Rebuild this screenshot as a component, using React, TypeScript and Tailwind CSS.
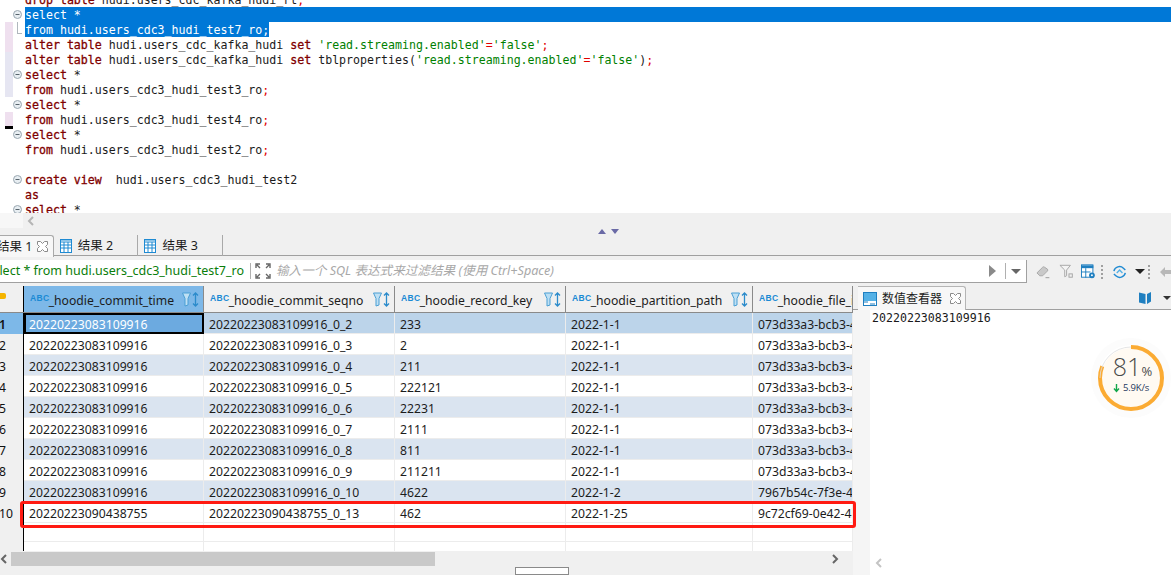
import React from "react";

type Token = { t: string; c?: "kw" | "str" | "op" };
type CodeLine = { marker?: string; fold?: boolean; bracket?: boolean; selected?: "full" | "text"; tokens: Token[] };

const kw = (t: string): Token => ({ t, c: "kw" });
const str = (t: string): Token => ({ t, c: "str" });
const op = (t: string): Token => ({ t, c: "op" });

const PINK = "bg-[#efe0ef]";
const LAV = "bg-[#e6e6f2]";

const codeLines: CodeLine[] = [
  { tokens: [kw("drop table"), { t: " hudi.users_cdc_kafka_hudi_rt" }, op(";")] },
  { fold: true, selected: "full", tokens: [{ t: "select *" }] },
  { bracket: true, marker: PINK, selected: "text", tokens: [{ t: "from hudi.users_cdc3_hudi_test7_ro;" }] },
  { marker: PINK, tokens: [kw("alter table"), { t: " hudi.users_cdc_kafka_hudi " }, kw("set"), { t: " " }, str("'read.streaming.enabled'"), op("="), str("'false'"), op(";")] },
  { marker: LAV, tokens: [kw("alter table"), { t: " hudi.users_cdc_kafka_hudi " }, kw("set"), { t: " tblproperties(" }, str("'read.streaming.enabled'"), op("="), str("'false'"), { t: ")" }, op(";")] },
  { marker: LAV, fold: true, tokens: [kw("select"), { t: " *" }] },
  { marker: LAV, tokens: [kw("from"), { t: " hudi.users_cdc3_hudi_test3_ro" }, op(";")] },
  { fold: true, tokens: [kw("select"), { t: " *" }] },
  { marker: PINK, tokens: [kw("from"), { t: " hudi.users_cdc3_hudi_test4_ro" }, op(";")] },
  { fold: true, tokens: [kw("select"), { t: " *" }] },
  { tokens: [kw("from"), { t: " hudi.users_cdc3_hudi_test2_ro" }, op(";")] },
  { tokens: [] },
  { fold: true, tokens: [kw("create view"), { t: "  hudi.users_cdc3_hudi_test2" }] },
  { tokens: [kw("as")] },
  { fold: true, tokens: [kw("select"), { t: " *" }] },
];

const tokenClass = { kw: "text-[#7f0000] [-webkit-text-stroke:0.3px_#7f0000]", str: "text-[#008000]", op: "text-[#e00000]" };

const rows = [
  ["1", "20220223083109916", "20220223083109916_0_2", "233", "2022-1-1", "073d33a3-bcb3-4e1a"],
  ["2", "20220223083109916", "20220223083109916_0_3", "2", "2022-1-1", "073d33a3-bcb3-4e1a"],
  ["3", "20220223083109916", "20220223083109916_0_4", "211", "2022-1-1", "073d33a3-bcb3-4e1a"],
  ["4", "20220223083109916", "20220223083109916_0_5", "222121", "2022-1-1", "073d33a3-bcb3-4e1a"],
  ["5", "20220223083109916", "20220223083109916_0_6", "22231", "2022-1-1", "073d33a3-bcb3-4e1a"],
  ["6", "20220223083109916", "20220223083109916_0_7", "2111", "2022-1-1", "073d33a3-bcb3-4e1a"],
  ["7", "20220223083109916", "20220223083109916_0_8", "811", "2022-1-1", "073d33a3-bcb3-4e1a"],
  ["8", "20220223083109916", "20220223083109916_0_9", "211211", "2022-1-1", "073d33a3-bcb3-4e1a"],
  ["9", "20220223083109916", "20220223083109916_0_10", "4622", "2022-1-2", "7967b54c-7f3e-4a1c"],
  ["10", "20220223090438755", "20220223090438755_0_13", "462", "2022-1-25", "9c72cf69-0e42-4b7d"],
];

const columns = ["_hoodie_commit_time", "_hoodie_commit_seqno", "_hoodie_record_key", "_hoodie_partition_path", "_hoodie_file_id"];
const GRID = "grid grid-cols-[24px_180px_191px_171px_187px_100px]";

const FoldIcon = () => (
  <svg width="9" height="9" viewBox="0 0 9 9" className="absolute left-[13px] top-[3px]">
    <circle cx="4.5" cy="4.5" r="4" fill="#e8eef2" stroke="#9aa7b0" />
    <path d="M2.5 4.5h4" stroke="#56636c" />
  </svg>
);

const TableIcon = () => (
  <svg width="12" height="14" viewBox="0 0 12 14" fill="none">
    <rect x="0.5" y="0.5" width="11" height="13" fill="#fff" stroke="#1f8ad2" />
    <path d="M0 1h12v2H0zM4 3v10M8 3v10M0 6h12M0 9h12" stroke="#1f8ad2" />
  </svg>
);

const CloseIcon = () => (
  <svg width="11" height="11" viewBox="0 0 11 11" fill="#fff" stroke="#8a8a8a" className="shrink-0">
    <path d="M0.5 0.5h3l2 2 2-2h3v3l-2 2 2 2v3h-3l-2-2-2 2h-3v-3l2-2-2-2z" />
  </svg>
);

const SortFilter = () => (
  <svg width="18" height="15" viewBox="0 0 18 15" fill="none" className="shrink-0">
    <path d="M0.5 1h8L6 6.5V13L3 14V6.5z" fill="#bfe0f4" stroke="#4a9fd4" />
    <path d="M13.5 1v13M11 3.5l2.5-2.5L16 3.5M11 11.5l2.5 2.5 2.5-2.5" stroke="#2b8bcb" strokeWidth="1.3" />
  </svg>
);

function Header({ label, active }: { label: string; active?: boolean }) {
  return (
    <div className={`flex items-center pl-[6px] pr-[3px] pt-[1px] overflow-hidden border-r border-[#8a8a8a] ${active ? "bg-[#7db8e8]" : "bg-[#f0f0f0]"}`}>
      <span className="text-[8.5px] leading-none font-bold text-[#1a8ad4] font-['Liberation_Sans',sans-serif] -mr-[1px] shrink-0 -mt-[3px] tracking-[0.4px]">ABC</span>
      <span className="whitespace-nowrap text-[12.2px] leading-[20px] pt-[3px] text-[#1c1c1c] grow">{label}</span>
      {label !== "_hoodie_file_id" && <SortFilter />}
    </div>
  );
}

function Toolbar() {
  return (
    <div className="flex items-center w-[144px] pl-[9px] gap-[9px] shrink-0">
      <svg width="15" height="15" viewBox="0 0 15 15">
        <path d="M1 9l6-6a1.5 1.5 0 0 1 2 0l3 2a1.5 1.5 0 0 1 0 2l-5 5H4z" fill="#c9c9c9" stroke="#a8a8a8" />
        <path d="M10 14h4" stroke="#9a9a9a" />
      </svg>
      <svg width="15" height="15" viewBox="0 0 15 15" fill="none">
        <path d="M1 1h11L8 6v6l-2 1V6z" fill="#f4f4f4" stroke="#a5a5a5" />
        <rect x="10.5" y="10" width="3.5" height="3.5" stroke="#a5a5a5" />
      </svg>
      <svg width="15" height="15" viewBox="0 0 15 15" fill="none" className="-ml-[2px]">
        <rect x="0.5" y="0.5" width="12" height="13" fill="#fff" stroke="#1f7fc0" />
        <path d="M0 2.5h13" stroke="#1f7fc0" strokeWidth="3" />
        <path d="M5 4v10M0 8h10" stroke="#1f7fc0" />
        <circle cx="11.5" cy="11.5" r="3" fill="#1f7fc0" />
        <circle cx="11.5" cy="11.5" r="1" fill="#fff" />
      </svg>
      <span className="w-[2px] h-[14px] border-l-2 border-dotted border-[#a0a0a0] -ml-[3px]" />
      <svg width="16" height="16" viewBox="0 0 16 16" fill="none" stroke="#1f8ad2" strokeWidth="1.5">
        <path d="M2 7a6 6 0 0 1 10-3l2 2M14 9a6 6 0 0 1-10 3l-2-2" />
        <path d="M5 9l3-3 3 3" stroke="#54b1e6" />
      </svg>
      <span className="w-0 h-0 border-x-[5px] border-x-transparent border-t-[5px] border-t-[#222] -ml-[1px]" />
      <span className="w-[2px] h-[14px] border-l-2 border-dotted border-[#a0a0a0] -ml-[6px]" />
      <svg width="12" height="12" viewBox="0 0 12 12" className="shrink-0">
        <path d="M6 1L1 6l5 5V8h6V4H6z" fill="#b8b8b8" />
      </svg>
    </div>
  );
}

function SpeedWidget() {
  return (
    <div className="absolute left-[1091px] top-[338px] w-[80px] h-[80px] rounded-full bg-[#fcfcfc]">
      <div className="absolute left-[6px] top-[6px] w-[68px] h-[68px]">
        <svg width="68" height="68" viewBox="0 0 68 68" fill="none" className="absolute inset-0">
          <circle cx="34" cy="34" r="33" fill="#fff" />
          <circle cx="34" cy="34" r="30" fill="#fffaf2" />
          <circle cx="34" cy="34" r="31" stroke="#fbab33" strokeWidth="4" strokeDasharray="157.8 194.8" transform="rotate(-90 34 34)" />
          <path d="M3 34A31 31 0 0 1 34 3" stroke="#dedede" strokeWidth="0.8" />
        </svg>
        <div className="absolute inset-0 flex flex-col items-center font-['Open_Sans',sans-serif]">
          <div className="flex items-baseline mt-[10px] text-[#4a4a4a] leading-none pl-[3px]">
            <span className="text-[25px] font-light">81</span>
            <span className="text-[13px]">%</span>
          </div>
          <div className="flex items-center mt-[4px] text-[9.5px] leading-none text-[#24385c] tracking-[-0.2px]">
            <svg width="7" height="10" viewBox="0 0 7 10" className="mr-[3px]">
              <path d="M3.5 1v7M1 5.5l2.5 3 2.5-3" stroke="#12a64a" strokeWidth="1.4" fill="none" />
            </svg>
            5.9K/s
          </div>
        </div>
      </div>
    </div>
  );
}

export default function App() {
  return (
    <div className="relative w-[1171px] h-[575px] overflow-hidden bg-[#f0f0f0] flex flex-col font-['Noto_Sans','Noto_Sans_CJK_SC',sans-serif] text-[#1c1c1c]">
      {/* EDITOR */}
      <div className="h-[213px] shrink-0 overflow-hidden bg-white font-['DejaVu_Sans_Mono',monospace] text-[11.6px] text-[#1a1a1a]">
        <div className="-mt-[8px]">
          {codeLines.map((line, i) => (
            <div key={i} className={`relative flex h-[15px] ${line.selected === "full" ? "bg-[#0078d7]" : ""}`}>
              <div className="relative w-[25px] h-[15px] shrink-0 bg-white">
                {line.marker && <div className={`absolute left-[5px] top-0 w-[8px] h-[15px] ${line.marker}`} />}
                {i === 8 && <div className="absolute left-[5px] top-[14px] w-[8px] h-[3px] bg-black z-10" />}
                {line.fold && <FoldIcon />}
                {line.bracket && <div className="absolute left-[17px] top-0 w-[5px] h-[12px] border-l border-b border-[#b0b7bd]" />}
              </div>
              <pre className={`h-[15px] leading-[17px] font-['DejaVu_Sans_Mono',monospace] ${line.selected ? "bg-[#0078d7] text-white" : ""}`}>
                {line.tokens.map((tok, j) => (
                  <span key={j} className={tok.c ? tokenClass[tok.c] : ""}>
                    {tok.t}
                  </span>
                ))}
              </pre>
            </div>
          ))}
        </div>
      </div>

      {/* EDITOR SCROLLBAR */}
      <div className="h-[15px] shrink-0 flex items-center">
        <div className="w-[23px] h-full bg-[#f7f7f7]" />
        <svg width="8" height="10" viewBox="0 0 8 10" className="ml-[4px]">
          <path d="M6 1L2 5l4 4" stroke="#b5b5b5" strokeWidth="2" fill="none" />
        </svg>
      </div>

      {/* RESULT TABS */}
      <div className="h-[28px] shrink-0 flex items-end border-b border-[#a0a0a0]">
        <div className="w-[223px] h-[21px] flex text-[12.5px] leading-[21px] shrink-0 -mb-[1px]">
          <div className="w-[54px] h-[22px] bg-[#f7f7f7] border-t border-r border-[#a9a9a9] rounded-tr-[3px] flex items-center overflow-hidden">
            <span className="whitespace-nowrap -ml-[3px]">结果 1</span>
            <span className="ml-[5px]">
              <CloseIcon />
            </span>
          </div>
          <div className="w-[85px] h-[21px] border-r border-[#a9a9a9] flex items-center pl-[6px] gap-[6px]">
            <TableIcon />
            <span>结果 2</span>
          </div>
          <div className="w-[85px] h-[21px] border-r border-[#a9a9a9] flex items-center pl-[6px] gap-[6px]">
            <TableIcon />
            <span>结果 3</span>
          </div>
        </div>
        <div className="self-start ml-[375px] mt-[1px] flex gap-[5px]">
          <span className="w-0 h-0 border-x-[4.5px] border-x-transparent border-b-[5px] border-b-[#6a6aa6]" />
          <span className="w-0 h-0 border-x-[4.5px] border-x-transparent border-t-[5px] border-t-[#6a6aa6]" />
        </div>
      </div>

      {/* FILTER BAR */}
      <div className="mt-[4px] h-[23px] shrink-0 flex">
        <div className="w-[1027px] h-[23px] bg-white border-b border-r border-[#a0a0a0] flex items-center overflow-hidden shrink-0">
          <span className="w-[250px] shrink-0 text-right text-[12.5px] leading-[24px] text-[#0a7d0a] whitespace-nowrap overflow-hidden flex justify-end pr-[6px]">select * from hudi.users_cdc3_hudi_test7_ro</span>
          <span className="w-px h-[16px] bg-[#b0b0b0]" />
          <svg width="16" height="16" viewBox="0 0 16 16" fill="none" stroke="#666" strokeWidth="1.4" className="ml-[4px] shrink-0">
            <path d="M1 5V1h4M11 1h4v4M1 11v4h4M15 11v4h-4M2 2l3 3M14 2l-3 3M2 14l3-3M14 14l-3-3" />
          </svg>
          <span className="ml-[5px] text-[12.6px] leading-[24px] italic text-[#a8a8a8] whitespace-nowrap w-[713px] shrink-0">输入一个 SQL 表达式来过滤结果 (使用 Ctrl+Space)</span>
          <span className="w-0 h-0 border-y-[6px] border-y-transparent border-l-[7px] border-l-[#8a8a8a]" />
          <span className="ml-[9px] w-px h-[16px] bg-[#b0b0b0]" />
          <span className="ml-[5px] w-0 h-0 border-x-[5px] border-x-transparent border-t-[5px] border-t-[#666]" />
        </div>
        <Toolbar />
      </div>

      <div className="flex mt-[3px] grow min-h-0">
        {/* RESULT GRID */}
        <div className="relative w-[853px] shrink-0 flex flex-col">
          <div className={`${GRID} h-[29px] border-b border-[#8a8a8a]`}>
            <div className="bg-[#f0f0f0] border-r border-black flex items-start pt-[4px] overflow-hidden">
              <span className="w-[6px] h-[6px] mt-[3px] bg-[#f5b400] rounded-r-[2px]" />
            </div>
            {columns.map((c, i) => (
              <Header key={c} label={c} active={i === 0} />
            ))}
          </div>
          {rows.map((row, i) => {
            const bg = i === 0 ? "bg-[#bcd4ea]" : i % 2 === 0 ? "bg-[#dae4f0]" : "bg-white";
            return (
              <div key={row[0]} className={`${GRID} h-[21px] text-[12.2px] leading-[23px] ${bg}`}>
                <div className={`border-r border-black text-[#111] whitespace-nowrap overflow-hidden pr-[1px] text-left -indent-[1px] ${i === 0 ? "bg-[#7db8e8] font-semibold" : "bg-[#f0f0f0]"}`}>{row[0]}</div>
                {row.slice(1).map((cell, j) => (
                  <div
                    key={j}
                    className={
                      i === 0 && j === 0
                        ? "whitespace-nowrap overflow-hidden bg-[#6caae0] text-white border-2 border-black pl-[3px] leading-[19px]"
                        : "whitespace-nowrap overflow-hidden pl-[5px] border-r border-b border-[#ececec]"
                    }
                  >
                    {cell}
                  </div>
                ))}
              </div>
            );
          })}
          {[21, 9].map((h, i) => (
            <div key={i} className={`${GRID} ${h === 21 ? "h-[21px]" : "h-[9px]"} bg-white`}>
              <div className="bg-[#f0f0f0] border-r border-black" />
              {columns.map((c) => (
                <div key={c} className={`border-r border-[#ececec] ${h === 21 ? "border-b" : ""}`} />
              ))}
            </div>
          ))}
          {/* red highlight on row 10 */}
          <div className="absolute left-[20px] top-[215px] w-[836px] h-[27px] border-[3px] border-[#ff1a12] rounded-[3px] z-10" />
          <div className="h-[16px] mt-[1px] bg-[#f0f0f0] flex items-center">
            <svg width="8" height="10" viewBox="0 0 8 10" className="shrink-0">
              <path d="M6 1L2 5l4 4" stroke="#666" strokeWidth="2" fill="none" />
            </svg>
            <div className="ml-[3px] w-[424px] h-full bg-[#c9c9c9]" />
            <svg width="8" height="10" viewBox="0 0 8 10" className="ml-[396px] shrink-0">
              <path d="M2 1l4 4-4 4" stroke="#666" strokeWidth="2" fill="none" />
            </svg>
          </div>
          <div className="ml-[515px] mt-[1px] w-[54px] h-[8px] bg-white border border-[#8a8a8a]" />
        </div>

        {/* VALUE VIEWER */}
        <div className="grow flex flex-col min-w-0">
          <div className="h-[24px] shrink-0 flex border-b border-[#a0a0a0]">
            <div className="ml-[5px] w-[109px] h-[24px] bg-[#f7f7f7] border-t border-r border-[#b5b5b5] rounded-tr-[3px] flex items-center pl-[5px] text-[12px]">
              <svg width="14" height="14" viewBox="0 0 14 14" className="shrink-0">
                <rect x="0.5" y="0.5" width="13" height="13" fill="#fff" stroke="#1f7fc0" />
                <rect x="1" y="1" width="12" height="8" fill="#54b1e6" />
                <path d="M0 10h5M7 12h5" stroke="#1f7fc0" />
              </svg>
              <span className="ml-[5px] whitespace-nowrap">数值查看器</span>
              <span className="ml-[8px]">
                <CloseIcon />
              </span>
            </div>
            <svg width="15" height="13" viewBox="0 0 15 13" className="ml-[173px] mt-[5px] shrink-0">
              <path d="M0 1.5l6.5 1.5V13L0 11.5zM8 3l4-2v9.5L8 13z" fill="#1f7fc0" />
            </svg>
            <span className="ml-[9px] mt-[10px] w-0 h-0 border-x-[4px] border-x-transparent border-t-[4px] border-t-[#333]" />
          </div>
          <div className="grow flex bg-white">
            <div className="w-[17px] bg-[#f5f5f5] shrink-0" />
            <div className="grow flex flex-col justify-between">
              <pre className="font-['DejaVu_Sans_Mono',monospace] text-[11.6px] leading-[15px] pl-[2px] pt-[1px] text-[#1a1a1a]">20220223083109916</pre>
              <svg width="8" height="10" viewBox="0 0 8 10" className="ml-[5px] mb-[7px]">
                <path d="M6 1L2 5l4 4" stroke="#c4c4c4" strokeWidth="2" fill="none" />
              </svg>
            </div>
          </div>
        </div>
      </div>

      <SpeedWidget />
    </div>
  );
}
